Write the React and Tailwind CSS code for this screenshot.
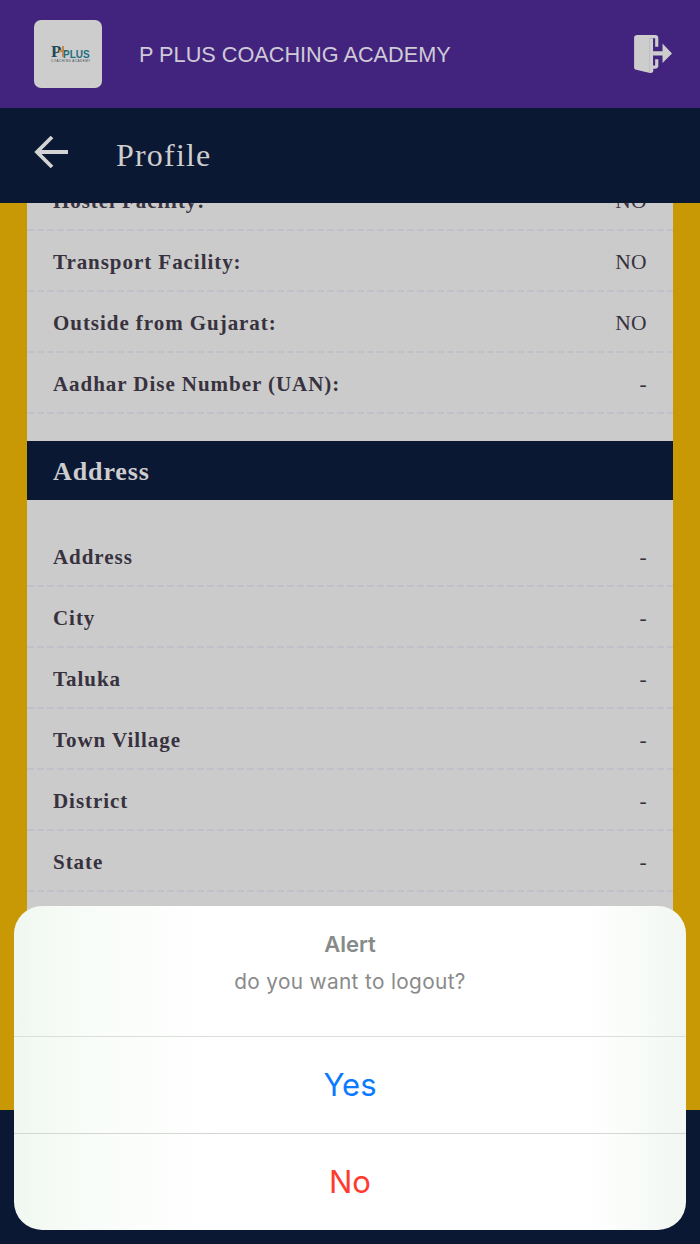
const Row = ({ label, value = "-" }) => (
  <div className="h-[61px] shrink-0 flex items-center justify-between pl-[26px] pr-[26px] bg-[repeating-linear-gradient(90deg,#c0c0c8_0_7px,transparent_7px_10px)] bg-bottom bg-no-repeat bg-[length:100%_2px]">
    <span className="pt-[2px] font-bold text-[21px] tracking-[0.95px] text-[#38323f]">{label}</span>
    <span className="pt-[1px] text-[21.5px] tracking-[0.4px] text-[#38323f]">{value}</span>
  </div>
);

export default function App() {
  return (
    <div className="relative w-[700px] h-[1244px] overflow-hidden flex flex-col bg-[#0b1834] font-['Liberation_Serif',serif]">
      <header className="h-[108px] shrink-0 bg-[#42247f] flex items-center pl-[34px] pr-[28px]">
        <div className="w-[68px] h-[68px] rounded-[7px] bg-[#cdcdcd] flex items-center justify-center shrink-0">
          <div className="relative w-[34px] h-[18px] leading-none">
            <span className="absolute left-0 top-[-2px] text-[#1c4a57] font-bold text-[17px]">P</span>
            <svg className="absolute left-[6px] top-0" width="12" height="14" viewBox="0 0 12 14">
              <path d="M6 1v11M2 6h8" stroke="#c8873a" strokeWidth="2" />
            </svg>
            <span className="absolute left-[12px] top-[5px] text-[#1f6f83] font-bold text-[10px] font-['Liberation_Sans',sans-serif]">PLUS</span>
            <span className="absolute left-0 top-[15px] text-[#3b4a55] text-[3px] tracking-[0.5px] whitespace-nowrap font-['Liberation_Sans',sans-serif]">COACHING ACADEMY</span>
          </div>
        </div>
        <span className="ml-[37px] mt-[2px] text-[21.7px] text-[#cfcbd6] font-['Liberation_Sans',sans-serif]">P PLUS COACHING ACADEMY</span>
        <svg className="ml-auto mb-[1px]" width="40" height="40" viewBox="0 0 38 38">
          <path d="M2 3.500C2 1.800 3.200 1 5 1h17c2 0 3 1 3 3v8h-3V4h-5v33l-13-3c-1.400-.3-2-1.200-2-2.500z" fill="#cdcdcd" />
          <path d="M17 37c2 .4 3.200-.5 3.200-2V33H22c2 0 3-1 3-3v-6h-3v6h-2V4h-3z" fill="#cdcdcd" />
          <path d="M20 16.500h9V9l9 9.500-9 9V20.500h-9z" fill="#cdcdcd" />
        </svg>
      </header>

      <div className="h-[95px] shrink-0 bg-[#0b1834] flex items-center pl-[34px]">
        <svg className="mb-[7px]" width="35" height="34" viewBox="0 0 35 34" fill="none" stroke="#d4d4d4" strokeWidth="3.800">
          <path d="M34 17H3M18 2 3 17l15 15" />
        </svg>
        <span className="ml-[47px] mb-[2px] text-[32px] tracking-[1.200px] text-[#cdcdcd]">Profile</span>
      </div>

      <main className="h-[907px] shrink-0 bg-[#c89805] px-[27px] overflow-hidden">
        <div className="bg-[#cbcbcb] h-full flex flex-col overflow-hidden">
          <div className="mt-[-33px] flex flex-col">
            <Row label="Hostel Facility:" value="NO" />
            <Row label="Transport Facility:" value="NO" />
            <Row label="Outside from Gujarat:" value="NO" />
            <Row label="Aadhar Dise Number (UAN):" />
          </div>
          <div className="mt-[27px] h-[59px] shrink-0 bg-[#0b1834] flex items-center pl-[26px] pt-[2px] font-bold text-[26px] tracking-[0.9px] text-[#cdcdcd]">Address</div>
          <div className="mt-[26px] flex flex-col">
            {["Address", "City", "Taluka", "Town Village", "District", "State", "Country"].map((l) => (
              <Row key={l} label={l} />
            ))}
          </div>
        </div>
      </main>

      <div className="absolute left-[14px] top-[906px] w-[672px] h-[324px] rounded-[28px] overflow-hidden bg-[linear-gradient(90deg,#f0f7f0,#f8fcf8_10%,#ffffff_30%,#ffffff_85%,#f8fbf8_93%,#f2f7f2)] flex flex-col font-['Inter',sans-serif]">
        <div className="h-[131px] shrink-0 border-b border-[#dcdedc] flex flex-col items-center pt-[25px]">
          <span className="text-[22px] leading-[26px] font-semibold text-[#868a88]">Alert</span>
          <span className="mt-[12px] text-[20.8px] leading-[26px] tracking-[0.35px] text-[#8a8a8a]">do you want to logout?</span>
        </div>
        <div className="h-[97px] shrink-0 border-b border-[#d4d6d4] flex items-center justify-center text-[31px] text-[#0a7aff]">Yes</div>
        <div className="flex-1 flex items-center justify-center text-[31px] text-[#ff3b30]">No</div>
      </div>
    </div>
  );
}
